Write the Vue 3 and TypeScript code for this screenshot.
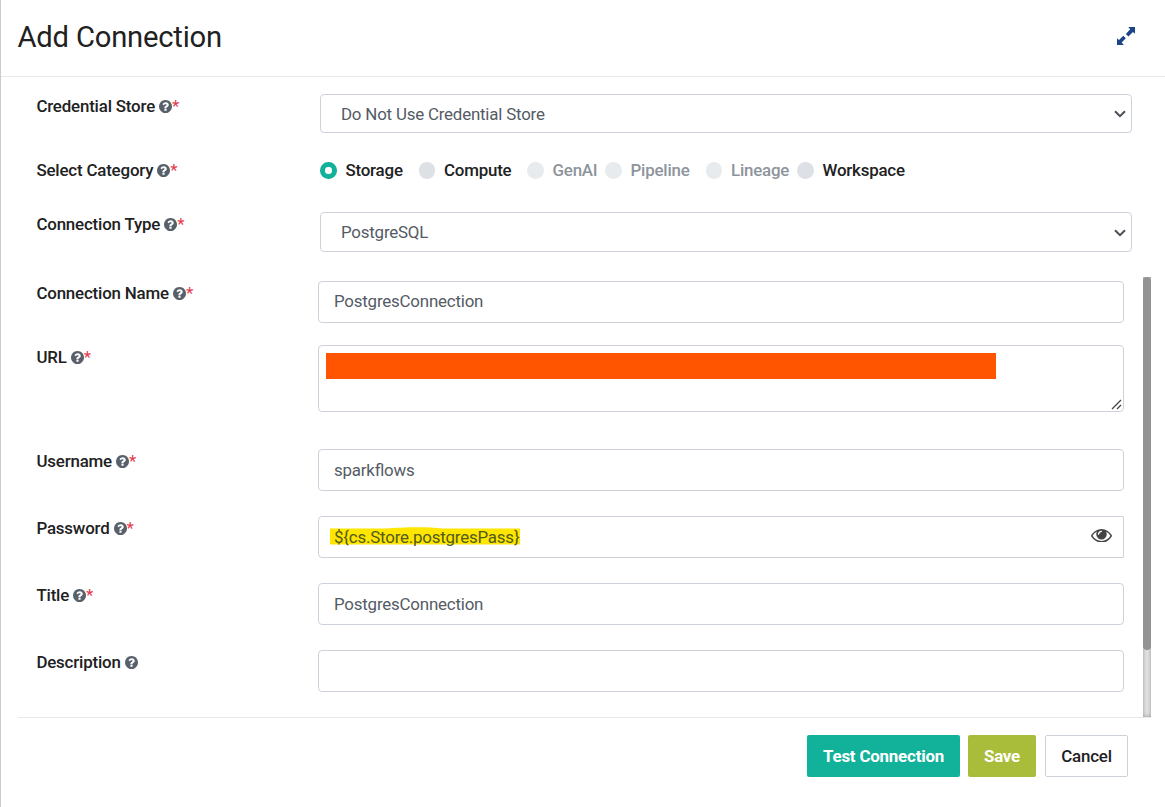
<script setup lang="ts">
import { ref } from 'vue'

interface Category { name: string; disabled: boolean }
interface Field { label: string; kind: string; value: string; required: boolean }

const categories: Category[] = [
  { name: 'Storage', disabled: false },
  { name: 'Compute', disabled: false },
  { name: 'GenAI', disabled: true },
  { name: 'Pipeline', disabled: true },
  { name: 'Lineage', disabled: true },
  { name: 'Workspace', disabled: false },
]
const selected = ref('Storage')

const general: Field[] = [
  { label: 'Credential Store', kind: 'select', value: 'Do Not Use Credential Store', required: true },
  { label: 'Select Category', kind: 'radios', value: '', required: true },
  { label: 'Connection Type', kind: 'select tall', value: 'PostgreSQL', required: true },
]
const details: Field[] = [
  { label: 'Connection Name', kind: 'text first', value: 'PostgresConnection', required: true },
  { label: 'URL', kind: 'area', value: '', required: true },
  { label: 'Username', kind: 'text', value: 'sparkflows', required: true },
  { label: 'Password', kind: 'password', value: '${cs.Store.postgresPass}', required: true },
  { label: 'Title', kind: 'text', value: 'PostgresConnection', required: true },
  { label: 'Description', kind: 'text', value: '', required: false },
]
const helpPath =
  'M1024 1376v-192q0-14-9-23t-23-9h-192q-14 0-23 9t-9 23v192q0 14 9 23t23 9h192q14 0 23-9t9-23zm256-672q0-88-55.5-163t-138.5-116-170-41q-243 0-371 213-15 24 8 42l132 100q7 6 19 6 16 0 25-12 53-68 86-92 34-24 86-24 48 0 85.5 26t37.5 59q0 38-20 61t-68 45q-63 28-115.5 86.5t-52.5 125.5v36q0 14 9 23t23 9h192q14 0 23-9t9-23q0-19 21.5-49.5t54.5-49.5q32-18 49-28.5t46-35 44.5-48 28-60.5 12.5-81zm384 192q0 209-103 385.5t-279.5 279.5-385.5 103-385.5-103-279.5-279.5-103-385.5 103-385.5 279.5-279.5 385.5-103 385.5 103 279.5 279.5 103 385.5z'
</script>

<template>
  <div class="dialog">
    <header class="head">
      <h1>Add Connection</h1>
      <svg class="expand" viewBox="0 0 18 18">
        <path d="M11.2 0H18v6.8l-2-1.8-4.6 4.4-2.5-2.5L13.2 2.2zM0 11.2l2 1.7 4.3-4.1 2.5 2.5-4.1 4.3L6.8 18H0z" />
      </svg>
    </header>

    <section class="general">
      <div v-for="f in general" :key="f.label" class="row" :class="f.kind">
        <label class="label"><span>{{ f.label }}</span><svg class="help" viewBox="128 128 1536 1536"><path :d="helpPath" /></svg><span v-if="f.required" class="req">*</span></label>
        <div v-if="f.kind === 'radios'" class="options">
          <label
            v-for="c in categories"
            :key="c.name"
            class="option"
            :class="{ disabled: c.disabled, on: selected === c.name }"
            @click="!c.disabled && (selected = c.name)"
          ><i class="dot"></i><span>{{ c.name }}</span></label>
        </div>
        <div v-else class="select-box">
          <span>{{ f.value }}</span>
          <svg class="chevron" viewBox="0 0 12 8"><path d="M1 1.2 6 6.2l5-5" /></svg>
        </div>
      </div>
    </section>

    <section class="details">
      <div class="fields">
        <div v-for="f in details" :key="f.label" class="row" :class="f.kind">
          <label class="label"><span>{{ f.label }}</span><svg class="help" viewBox="128 128 1536 1536"><path :d="helpPath" /></svg><span v-if="f.required" class="req">*</span></label>
          <div v-if="f.kind === 'area'" class="box url">
            <div class="redacted"></div>
            <svg class="grip" viewBox="0 0 11 11"><path d="M1 10 10 1M6 10l4-4" /></svg>
          </div>
          <div v-else-if="f.kind === 'password'" class="box secret">
            <span class="marked">
              <svg class="marker" viewBox="0 0 190 18" preserveAspectRatio="none"><path d="M0 1.6H56C72 0 98-.6 113 1.6H190V17.6H0z" /></svg>
              <span class="value">{{ f.value }}</span>
            </span>
            <svg class="eye" viewBox="0 384 1792 1152"><path d="M1664 960q-152-236-381-353 61 104 61 225 0 185-131.5 316.5t-316.5 131.5-316.5-131.5-131.5-316.5q0-121 61-225-229 117-381 353 133 205 333.5 326.5t434.5 121.5 434.5-121.5 333.5-326.5zm-720-384q0-20-14-34t-34-14q-125 0-214.5 89.5t-89.5 214.5q0 20 14 34t34 14 34-14 14-34q0-86 61-147t147-61q20 0 34-14t14-34zm848 384q0 34-20 69-140 230-376.5 368.5t-499.5 138.5-499.5-139-376.5-368q-20-35-20-69t20-69q140-229 376.5-368t499.5-139 499.5 139 376.5 368q20 35 20 69z" /><path class="glint" d="M655 790q25-150 190-190" /></svg>
          </div>
          <div v-else class="box"><span>{{ f.value }}</span></div>
        </div>
      </div>
      <div class="track"><div class="thumb"></div></div>
    </section>

    <footer class="foot">
      <button class="btn test">Test Connection</button>
      <button class="btn save">Save</button>
      <button class="btn cancel">Cancel</button>
    </footer>
  </div>
</template>

<style>
body { margin: 0; background: #fff; }
</style>

<style scoped>
* { box-sizing: border-box; }
.dialog {
  width: 1165px;
  height: 807px;
  border-left: 1px solid #cbcbcd;
  background: #fff;
  color: #212529;
  font: 400 16.9px/24px Roboto, sans-serif;
  letter-spacing: -0.2px;
  font-feature-settings: "liga" 1;
  overflow: hidden;
}
.head {
  height: 77px;
  display: flex;
  justify-content: space-between;
  align-items: flex-start;
  padding: 17px 30px 0 16.5px;
  border-bottom: 1px solid #e7e8ea;
}
h1 { margin: 0; font-size: 29.2px; line-height: 40px; font-weight: 400; color: #212122; }
.expand { width: 18px; height: 18px; margin-top: 10px; fill: #1c4587; }
.general { padding: 17px 0 0 35.4px; height: 200px; }
.row { display: grid; grid-template-columns: 281.6px 1fr; align-items: start; height: 67px; }
.general .row { height: 64px; grid-template-columns: 283.6px 812px; }
.general .row.radios { height: 54px; }
.label { display: flex; align-items: center; font-weight: 500; letter-spacing: -0.18px; color: #212122; white-space: nowrap; }
.help { width: 13px; height: 13px; margin-left: 4px; margin-top: 1px; fill: #58616b; }
.req { color: #e5394c; font-weight: 400; }
.select-box {
  height: 39px;
  display: flex;
  align-items: center;
  justify-content: space-between;
  padding: 0 5px 0 20px;
  border: 1px solid #cdd2da;
  border-radius: 4px;
  color: #545b64;
}
.tall .select-box { height: 40px; }
.tall .chevron { margin-top: 1px; }
.chevron { width: 12px; height: 8px; fill: none; stroke: #484e57; stroke-width: 2; }
.options { display: grid; grid-template-columns: 98.5px 108.5px 78px 100.5px 91.5px auto; padding-left: 0.5px; }
.option { display: flex; align-items: center; gap: 8.5px; font-weight: 500; color: #212122; }
.dot { width: 16.5px; height: 16.5px; flex: none; border-radius: 50%; background: #dde0e5; margin-top: 1px; }
.on .dot { background: #fff; border: 5px solid #12b199; }
.option.disabled { color: #8d949c; }
.disabled .dot { background: #e8ebee; }
.details { height: 440px; display: flex; justify-content: space-between; padding: 0 14px 0 35.4px; }
.fields { width: 1087.6px; padding-top: 4px; overflow: hidden; }
.row.first { height: 64px; }
.row.area { height: 104px; }
.box {
  height: 42px;
  padding: 0 11px 0 15px;
  display: flex;
  align-items: center;
  border: 1px solid #cdd2da;
  border-radius: 4px;
  color: #545b64;
}
.first .box { padding-bottom: 2px; }
.box.url { position: relative; height: 67px; padding: 7px; align-items: flex-start; }
.redacted { width: 670px; height: 25.5px; background: #ff5500; }
.grip { position: absolute; right: 1px; bottom: 1px; width: 11px; height: 11px; fill: none; stroke: #444; stroke-width: 1.3; }
.secret { justify-content: space-between; border-radius: 4px 0 0 4px; }
.marked { position: relative; }
.marker { position: absolute; left: -4px; top: 2px; width: 190px; height: 18px; fill: #ffe600; }
.value { position: relative; color: #525a1c; }
.eye { width: 21px; height: 13.5px; margin-bottom: 3px; fill: #444; }
.glint { fill: none; stroke: #fff; stroke-width: 85; stroke-linecap: round; }
.track { width: 8px; height: 440px; background: #e3e3e3; box-shadow: inset 0 0 4px rgba(0, 0, 0, 0.35); }
.thumb { height: 373px; background: #939393; border-radius: 4px; }
.foot {
  display: flex;
  justify-content: flex-end;
  margin: 0 14px 0 17px;
  padding: 17px 23px 0 0;
  border-top: 1px solid #e7e8ea;
}
.btn {
  height: 42px;
  padding: 0;
  border: 0;
  border-radius: 2px;
  font: 700 16.9px/24px Roboto, sans-serif;
  letter-spacing: -0.2px;
  color: #fff;
}
.test { width: 153px; margin-right: 8px; background: #12b199; }
.save { width: 68px; margin-right: 9px; background: #a9bd3a; }
.cancel { width: 83px; border: 1px solid #cdd2da; background: #fff; color: #212122; font-weight: 500; }
</style>
